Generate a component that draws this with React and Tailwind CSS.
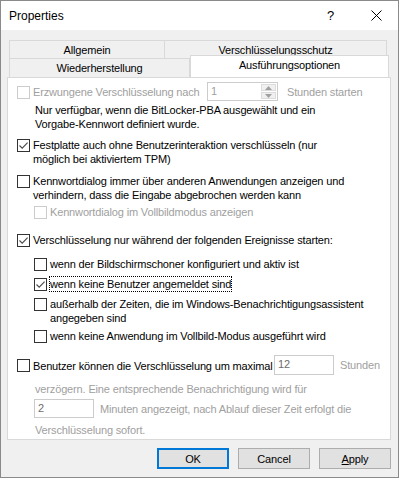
import React from "react";

function Box({ checked = false, disabled = false }) {
  return (
    <span
      className={
        disabled
          ? "mt-[1px] flex h-[13px] w-[13px] shrink-0 items-center justify-center border border-[#cccccc] bg-white"
          : "mt-[1px] flex h-[13px] w-[13px] shrink-0 items-center justify-center border border-[#333333] bg-white"
      }
    >
      {checked && (
        <svg width="11" height="11" viewBox="0 0 11 11">
          <path d="M1.5 5.5 L4.2 8.2 L9.6 2.6" stroke="#4a4a4a" strokeWidth="1.1" fill="none" />
        </svg>
      )}
    </span>
  );
}

function Row({ checked, disabled, children, className = "" }) {
  return (
    <div className={"flex items-start gap-[3px] " + className}>
      <Box checked={checked} disabled={disabled} />
      <div className={disabled ? "text-[#a0a0a0]" : "text-black"}>{children}</div>
    </div>
  );
}

export default function App() {
  return (
    <div className="flex h-[478px] w-[399px] flex-col border border-[#8a8a8a] bg-[#f0f0f0] font-['Liberation_Sans',Arial,sans-serif] text-[11px] leading-[14px] tracking-[-0.15px] text-black">
      {/* Title bar */}
      <div className="flex h-[29px] shrink-0 items-center bg-white">
        <div className="ml-[8px] text-[12px] tracking-normal">Properties</div>
        <div className="ml-auto mr-[37px] text-[13px]">?</div>
        <svg className="mr-[16px]" width="11" height="11" viewBox="0 0 11 11">
          <path d="M0.5 0.5 L10.5 10.5 M10.5 0.5 L0.5 10.5" stroke="#000" strokeWidth="1" />
        </svg>
      </div>

      {/* Tabs */}
      <div className="mt-[10px] ml-[8px] flex h-[18px]">
        <div className="flex w-[156px] items-center justify-center border border-b-0 border-[#d9d9d9]">Allgemein</div>
        <div className="flex w-[222px] items-center justify-center border border-b-0 border-l-0 border-[#d9d9d9]">
          Verschlüsselungsschutz
        </div>
      </div>
      <div className="flex h-[19px] items-end">
        <div className="ml-[8px] flex h-[19px] w-[181px] items-center justify-center border border-b-0 border-[#d9d9d9]">
          Wiederherstellung
        </div>
        <div className="relative z-10 -mt-[2px] flex h-[22px] w-[199px] items-start justify-center border border-b-0 border-[#d9d9d9] bg-white pt-[2px]">
          Ausführungsoptionen
        </div>
      </div>

      {/* Panel */}
      <div className="ml-[6px] flex h-[363px] w-[384px] flex-col border border-[#d9d9d9] bg-white pl-[9px]">
        {/* Row 1 */}
        <div className="mt-[4px] flex h-[19px] items-center">
          <div className="flex w-[190px] items-center gap-[3px]">
            <Box disabled />
            <span className="mt-[1px] text-[#a0a0a0]">Erzwungene Verschlüsselung nach</span>
          </div>
          <div className="flex h-[19px] w-[71px] border border-[#cccccc] bg-white">
            <div className="flex-1 pl-[3px] pt-[1px] text-[#a0a0a0]">1</div>
            <div className="flex w-[16px] flex-col gap-[1px] py-[1px] pr-[1px]">
              <div className="flex flex-1 items-center justify-center bg-[#f0f0f0] border border-[#dcdcdc]">
                <svg width="7" height="4" viewBox="0 0 7 4"><path d="M0 4 L3.5 0 L7 4 Z" fill="#a0a0a0" /></svg>
              </div>
              <div className="flex flex-1 items-center justify-center bg-[#f0f0f0] border border-[#dcdcdc]">
                <svg width="7" height="4" viewBox="0 0 7 4"><path d="M0 0 L3.5 4 L7 0 Z" fill="#a0a0a0" /></svg>
              </div>
            </div>
          </div>
          <span className="ml-[9px] text-[#a0a0a0]">Stunden starten</span>
        </div>

        <div className="mt-[2px] pl-[18px]">
          Nur verfügbar, wenn die BitLocker-PBA ausgewählt und ein
          <br />
          Vorgabe-Kennwort definiert wurde.
        </div>

        <Row checked className="mt-[7px]">
          Festplatte auch ohne Benutzerinteraktion verschlüsseln (nur
          <br />
          möglich bei aktiviertem TPM)
        </Row>

        <Row className="mt-[8px]">
          Kennwortdialog immer über anderen Anwendungen anzeigen und
          <br />
          verhindern, dass die Eingabe abgebrochen werden kann
        </Row>

        <Row disabled className="mt-[3px] pl-[17px]">
          Kennwortdialog im Vollbildmodus anzeigen
        </Row>

        <Row checked className="mt-[14px]">
          Verschlüsselung nur während der folgenden Ereignisse starten:
        </Row>

        <Row className="mt-[10px] pl-[17px]">wenn der Bildschirmschoner konfiguriert und aktiv ist</Row>

        <div className="mt-[6px] flex items-start gap-[2px] pl-[17px]">
          <Box checked />
          <div className="-mt-[1px] border border-dotted border-black px-0 py-0">wenn keine Benutzer angemeldet sind</div>
        </div>

        <Row className="mt-[5px] pl-[17px]">
          außerhalb der Zeiten, die im Windows-Benachrichtigungsassistent
          <br />
          angegeben sind
        </Row>

        <Row className="mt-[4px] pl-[17px]">wenn keine Anwendung im Vollbild-Modus ausgeführt wird</Row>

        {/* Delay row */}
        <div className="mt-[12px] flex h-[20px] items-center">
          <div className="flex w-[257px] items-center gap-[3px]">
            <Box />
            <span className="mt-[1px]">Benutzer können die Verschlüsselung um maximal</span>
          </div>
          <div className="flex h-[20px] w-[60px] items-start border border-[#cccccc] pl-[3px] pt-[1px] text-[#6d6d6d]">12</div>
          <span className="ml-[6px] text-[#a0a0a0]">Stunden</span>
        </div>

        <div className="mt-[7px] pl-[18px] text-[#a0a0a0]">verzögern. Eine entsprechende Benachrichtigung wird für</div>

        <div className="mt-[3px] flex h-[19px] items-center pl-[17px]">
          <div className="flex h-[19px] w-[60px] items-start border border-[#cccccc] pl-[3px] pt-[1px] text-[#6d6d6d]">2</div>
          <span className="ml-[6px] text-[#a0a0a0]">Minuten angezeigt, nach Ablauf dieser Zeit erfolgt die</span>
        </div>

        <div className="mt-[5px] pl-[18px] text-[#a0a0a0]">Verschlüsselung sofort.</div>
      </div>

      {/* Buttons */}
      <div className="mt-[8px] flex gap-[9px] pl-[156px]">
        <button className="h-[21px] w-[72px] border-2 border-[#0078d7] bg-[#e1e1e1] text-[11px]">OK</button>
        <button className="h-[21px] w-[72px] border border-[#adadad] bg-[#e1e1e1] text-[11px]">Cancel</button>
        <button className="h-[21px] w-[72px] border border-[#adadad] bg-[#e1e1e1] text-[11px]">
          <span className="underline">A</span>pply
        </button>
      </div>
    </div>
  );
}
